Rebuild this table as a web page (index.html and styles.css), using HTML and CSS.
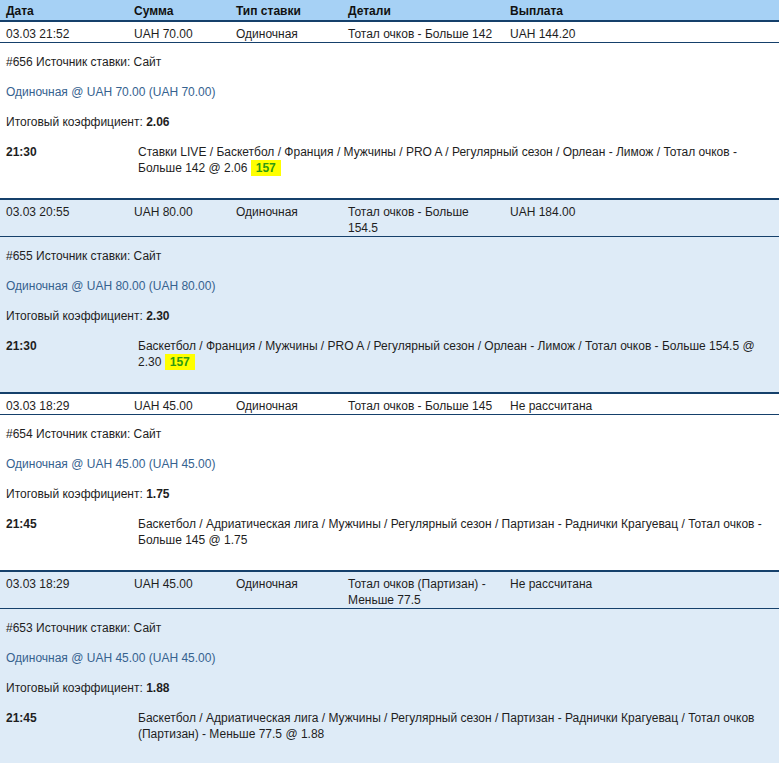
FILE: index.html
```html
<!DOCTYPE html>
<html lang="ru">
<head>
<meta charset="utf-8">
<title>Ставки</title>
<link rel="stylesheet" href="styles.css">
</head>
<body>
<div class="grid head">
  <div class="cell">Дата</div>
  <div class="cell">Сумма</div>
  <div class="cell">Тип ставки</div>
  <div class="cell">Детали</div>
  <div class="cell">Выплата</div>
</div>

<section class="bet">
  <div class="grid row">
    <div class="cell">03.03 21:52</div>
    <div class="cell">UAH 70.00</div>
    <div class="cell">Одиночная</div>
    <div class="cell">Тотал очков - Больше 142</div>
    <div class="cell">UAH 144.20</div>
  </div>
  <div class="detail">
    <p>#656 Источник ставки: Сайт</p>
    <p class="type">Одиночная @ UAH 70.00 (UAH 70.00)</p>
    <p>Итоговый коэффициент: <b>2.06</b></p>
    <div class="event"><b class="time">21:30</b><span class="desc">Ставки LIVE / Баскетбол / Франция / Мужчины / PRO A / Регулярный сезон / Орлеан - Лимож / Тотал очков - Больше 142 @ 2.06 <mark class="score">157</mark></span></div>
  </div>
</section>

<section class="bet alt">
  <div class="grid row">
    <div class="cell">03.03 20:55</div>
    <div class="cell">UAH 80.00</div>
    <div class="cell">Одиночная</div>
    <div class="cell">Тотал очков - Больше 154.5</div>
    <div class="cell">UAH 184.00</div>
  </div>
  <div class="detail">
    <p>#655 Источник ставки: Сайт</p>
    <p class="type">Одиночная @ UAH 80.00 (UAH 80.00)</p>
    <p>Итоговый коэффициент: <b>2.30</b></p>
    <div class="event"><b class="time">21:30</b><span class="desc">Баскетбол / Франция / Мужчины / PRO A / Регулярный сезон / Орлеан - Лимож / Тотал очков - Больше 154.5 @ 2.30 <mark class="score">157</mark></span></div>
  </div>
</section>

<section class="bet">
  <div class="grid row">
    <div class="cell">03.03 18:29</div>
    <div class="cell">UAH 45.00</div>
    <div class="cell">Одиночная</div>
    <div class="cell">Тотал очков - Больше 145</div>
    <div class="cell">Не рассчитана</div>
  </div>
  <div class="detail">
    <p>#654 Источник ставки: Сайт</p>
    <p class="type">Одиночная @ UAH 45.00 (UAH 45.00)</p>
    <p>Итоговый коэффициент: <b>1.75</b></p>
    <div class="event"><b class="time">21:45</b><span class="desc">Баскетбол / Адриатическая лига / Мужчины / Регулярный сезон / Партизан - Раднички Крагуевац / Тотал очков - Больше 145 @ 1.75</span></div>
  </div>
</section>

<section class="bet alt">
  <div class="grid row">
    <div class="cell">03.03 18:29</div>
    <div class="cell">UAH 45.00</div>
    <div class="cell">Одиночная</div>
    <div class="cell">Тотал очков (Партизан) - Меньше 77.5</div>
    <div class="cell">Не рассчитана</div>
  </div>
  <div class="detail">
    <p>#653 Источник ставки: Сайт</p>
    <p class="type">Одиночная @ UAH 45.00 (UAH 45.00)</p>
    <p>Итоговый коэффициент: <b>1.88</b></p>
    <div class="event"><b class="time">21:45</b><span class="desc">Баскетбол / Адриатическая лига / Мужчины / Регулярный сезон / Партизан - Раднички Крагуевац / Тотал очков (Партизан) - Меньше 77.5 @ 1.88</span></div>
  </div>
</section>
</body>
</html>
```

FILE: styles.css
```css
html, body {
  margin: 0;
  padding: 0;
  background: #ffffff;
}
body {
  font-family: "Liberation Sans", Arial, sans-serif;
  font-size: 12px;
  line-height: 16px;
  color: #1e1e1e;
  width: 779px;
}
.grid {
  display: grid;
  grid-template-columns: 128px 102px 112px 162px 1fr;
}
.cell {
  padding: 0 6px;
}
.head {
  background: #a6d1f5;
  border-bottom: 2px solid #15406b;
  font-weight: bold;
  padding: 3px 0 1px;
  color: #111;
}
.bet {
  border-bottom: 2px solid #15406b;
}
.alt {
  background: #deebf7;
}
.row {
  padding: 4px 0 0;
  border-bottom: 1px solid #15406b;
}
.detail {
  padding: 11px 6px 22px;
}
.detail p {
  margin: 0 0 14px;
}
.type {
  color: #36628f;
}
.event {
  display: flex;
}
.time {
  flex: 0 0 132px;
}
.desc {
  flex: 1;
  padding-right: 4px;
}
.score {
  display: inline-block;
  background: #ffff00;
  color: #2f9a12;
  font-weight: bold;
  line-height: 16px;
  padding: 0 5px;
}
```
